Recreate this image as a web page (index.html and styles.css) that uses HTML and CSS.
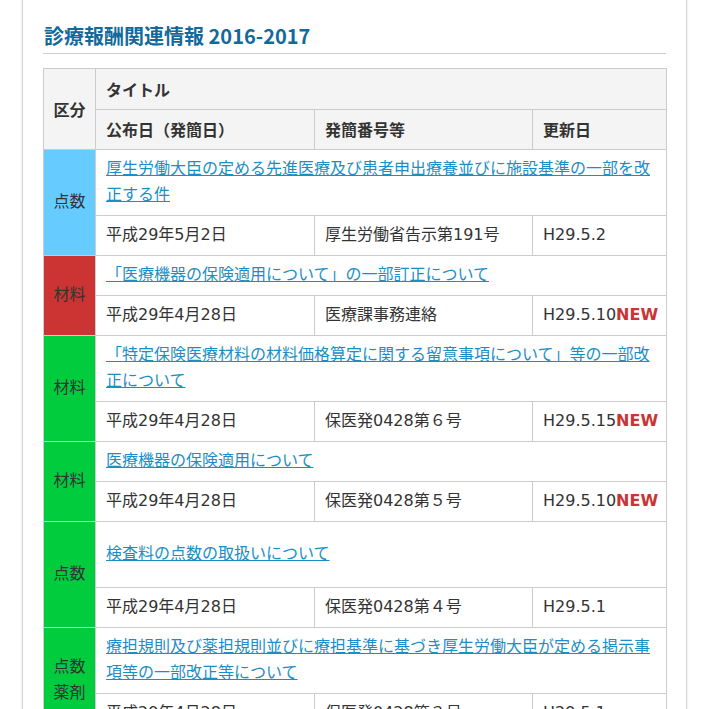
FILE: index.html
```html
<!DOCTYPE html>
<html lang="ja">
<head>
<meta charset="utf-8">
<title>診療報酬関連情報 2016-2017</title>
<link rel="stylesheet" href="styles.css">
</head>
<body>
<div class="card">
  <h2 class="heading">診療報酬関連情報 2016-2017</h2>
  <table class="info">
    <colgroup>
      <col class="c-cat">
      <col class="c-date">
      <col class="c-no">
      <col class="c-upd">
    </colgroup>
    <thead>
      <tr>
        <th rowspan="2" class="th-cat">区分</th>
        <th colspan="3">タイトル</th>
      </tr>
      <tr>
        <th>公布日（発簡日）</th>
        <th>発簡番号等</th>
        <th>更新日</th>
      </tr>
    </thead>
    <tbody>
      <tr>
        <td rowspan="2" class="cat cat-blue">点数</td>
        <td colspan="3"><a href="#">厚生労働大臣の定める先進医療及び患者申出療養並びに施設基準の一部を改正する件</a></td>
      </tr>
      <tr>
        <td>平成29年5月2日</td>
        <td>厚生労働省告示第191号</td>
        <td>H29.5.2</td>
      </tr>
      <tr>
        <td rowspan="2" class="cat cat-red">材料</td>
        <td colspan="3"><a href="#">「医療機器の保険適用について」の一部訂正について</a></td>
      </tr>
      <tr>
        <td>平成29年4月28日</td>
        <td>医療課事務連絡</td>
        <td>H29.5.10<span class="new">NEW</span></td>
      </tr>
      <tr>
        <td rowspan="2" class="cat cat-green">材料</td>
        <td colspan="3"><a href="#">「特定保険医療材料の材料価格算定に関する留意事項について」等の一部改正について</a></td>
      </tr>
      <tr>
        <td>平成29年4月28日</td>
        <td>保医発0428第６号</td>
        <td>H29.5.15<span class="new">NEW</span></td>
      </tr>
      <tr>
        <td rowspan="2" class="cat cat-green">材料</td>
        <td colspan="3"><a href="#">医療機器の保険適用について</a></td>
      </tr>
      <tr>
        <td>平成29年4月28日</td>
        <td>保医発0428第５号</td>
        <td>H29.5.10<span class="new">NEW</span></td>
      </tr>
      <tr>
        <td rowspan="2" class="cat cat-green">点数</td>
        <td colspan="3" class="tall"><a href="#">検査料の点数の取扱いについて</a></td>
      </tr>
      <tr>
        <td>平成29年4月28日</td>
        <td>保医発0428第４号</td>
        <td>H29.5.1</td>
      </tr>
      <tr>
        <td rowspan="2" class="cat cat-green">点数<br>薬剤</td>
        <td colspan="3"><a href="#">療担規則及び薬担規則並びに療担基準に基づき厚生労働大臣が定める掲示事項等の一部改正等について</a></td>
      </tr>
      <tr>
        <td>平成29年4月28日</td>
        <td>保医発0428第３号</td>
        <td>H29.5.1</td>
      </tr>
    </tbody>
  </table>
</div>
</body>
</html>
```

FILE: styles.css
```css
html, body {
  margin: 0;
  padding: 0;
  background: #ffffff;
}

body {
  font-family: "Noto Sans CJK JP", "Noto Sans", sans-serif;
  color: #333333;
  font-size: 16px;
}

.card {
  margin-left: 22px;
  width: 623px;
  padding: 21px 20px 40px 20px;
  background: #ffffff;
  border-left: 1px solid #d4d4d4;
  border-right: 1px solid #d4d4d4;
  box-shadow: 0 0 2px rgba(0, 0, 0, 0.12);
}

.heading {
  margin: 0;
  font-size: 20px;
  line-height: 30px;
  font-weight: bold;
  color: #12699b;
  padding-left: 1px;
  padding-bottom: 2px;
  border-bottom: 1px solid #cccccc;
}

.info {
  margin-top: 14px;
  width: 623px;
  table-layout: fixed;
  border-collapse: collapse;
}

.c-cat { width: 52px; }
.c-date { width: 219px; }
.c-no { width: 218px; }
.c-upd { width: 134px; }

.info th,
.info td {
  border: 1px solid #cccccc;
  padding: 6px 10px 7px 10px;
  line-height: 26px;
  text-align: left;
  vertical-align: middle;
  font-size: 16px;
}

.info td {
  font-family: "DejaVu Sans", "Noto Sans CJK JP", sans-serif;
}

.info th {
  background: #f4f4f4;
  font-weight: bold;
  color: #333333;
}

.info thead tr:first-child th {
  padding-top: 7px;
}

.info .th-cat {
  text-align: center;
  padding-left: 0;
  padding-right: 0;
}

.info .cat {
  text-align: center;
  padding-left: 0;
  padding-right: 0;
  color: #333333;
}

.cat-blue { background: #66ccff; }
.cat-red { background: #cc3333; }
.cat-green { background: #00cc3d; }

.info a {
  color: #1a8ec6;
  text-decoration: underline;
}

.info td.tall {
  height: 52px;
}

.new {
  color: #cc3333;
  font-weight: bold;
}
```
